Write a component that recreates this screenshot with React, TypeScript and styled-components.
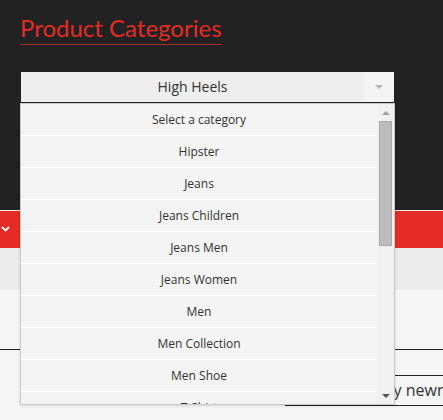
import React from "react";
import styled, { createGlobalStyle } from "styled-components";

const categories = [
  "Select a category",
  "Hipster",
  "Jeans",
  "Jeans Children",
  "Jeans Men",
  "Jeans Women",
  "Men",
  "Men Collection",
  "Men Shoe",
  "T-Shirt",
];

const GlobalStyle = createGlobalStyle`
  html, body {
    margin: 0;
    padding: 0;
    background: #f5f5f5;
    overflow: hidden;
  }
  * {
    box-sizing: border-box;
  }
`;

const App = () => {
  return (
    <>
      <GlobalStyle />
      <Page>
        <Header>
          <Title>Product Categories</Title>
          <SelectWrap>
            <SelectBox>
              <SelectValue>High Heels</SelectValue>
              <SelectArrow>
                <Triangle $dir="down" $color="#b5b5b5" />
              </SelectArrow>
            </SelectBox>
            <Dropdown>
              <OptionList>
                {categories.map((c) => (
                  <Option key={c}>{c}</Option>
                ))}
              </OptionList>
              <Scrollbar>
                <ScrollButton>
                  <Triangle $dir="up" $color="#a3a3a3" />
                </ScrollButton>
                <ScrollTrack>
                  <ScrollThumb />
                </ScrollTrack>
                <ScrollButton>
                  <Triangle $dir="down" $color="#555" />
                </ScrollButton>
              </Scrollbar>
            </Dropdown>
          </SelectWrap>
        </Header>
        <NavBar>
          <NavToggle>
            <svg width="9" height="6" viewBox="0 0 9 6">
              <polyline
                points="1,1 4.5,4.5 8,1"
                fill="none"
                stroke="#fff"
                strokeWidth="1.8"
              />
            </svg>
          </NavToggle>
        </NavBar>
        <SubBar />
        <Content>
          <Divider />
          <SortBox>Sort by newness</SortBox>
        </Content>
      </Page>
    </>
  );
};

/** page frame */
const Page = styled.div`
  position: relative;
  width: 443px;
  height: 420px;
  overflow: hidden;
  background: #f5f5f5;
  font-family: "Open Sans", "Liberation Sans", sans-serif;
`;

/** dark top area */
const Header = styled.div`
  height: 210px;
  background: #222222;
  padding: 13px 20px 0 20px;
`;

const Title = styled.h2`
  display: inline-block;
  margin: 0;
  font-family: Lato, "Open Sans", sans-serif;
  font-weight: 400;
  font-size: 24px;
  line-height: 29px;
  color: #e42b25;
  padding-bottom: 2px;
  border-bottom: 1px solid #a8302b;
`;

const SelectWrap = styled.div`
  position: relative;
  width: 375px;
  margin-top: 26px;
`;

const SelectBox = styled.div`
  display: flex;
  height: 32px;
  border: 1px solid #222;
  background: #eeeeee;
`;

const SelectValue = styled.div`
  flex: 1;
  text-align: center;
  font-size: 14px;
  line-height: 30px;
  color: #333;
`;

const SelectArrow = styled.div`
  width: 30px;
  display: flex;
  align-items: center;
  justify-content: center;
  background: #f4f4f4;
`;

const Triangle = styled.span<{ $dir: "up" | "down"; $color: string }>`
  width: 0;
  height: 0;
  border-left: 4px solid transparent;
  border-right: 4px solid transparent;
  ${({ $dir, $color }) =>
    $dir === "down"
      ? `border-top: 4px solid ${$color};`
      : `border-bottom: 4px solid ${$color};`}
`;

/** opened list of options */
const Dropdown = styled.div`
  position: absolute;
  top: 32px;
  left: 0;
  width: 375px;
  height: 302px;
  display: flex;
  background: #f4f4f4;
  border: 1px solid #c8c8c8;
  box-shadow: 0 1px 3px rgba(0, 0, 0, 0.12);
  z-index: 5;
`;

const OptionList = styled.div`
  flex: 1;
  overflow: hidden;
`;

const Option = styled.div`
  height: 32px;
  line-height: 31px;
  text-align: center;
  font-size: 12px;
  color: #333;
  border-bottom: 1px solid #ffffff;
`;

const Scrollbar = styled.div`
  width: 17px;
  display: flex;
  flex-direction: column;
  background: #f1f1f1;
`;

const ScrollButton = styled.div`
  height: 17px;
  display: flex;
  align-items: center;
  justify-content: center;
`;

const ScrollTrack = styled.div`
  flex: 1;
  padding: 0 2px;
`;

const ScrollThumb = styled.div`
  height: 125px;
  background: #bcbcbc;
  border: 1px solid #a9a9a9;
`;

/** red navigation band */
const NavBar = styled.div`
  height: 38px;
  background: #e42b25;
  border-top: 1px solid #e8e8e8;
  display: flex;
  align-items: center;
`;

const NavToggle = styled.div`
  width: 10px;
  display: flex;
  justify-content: center;
  margin-bottom: 2px;
`;

const SubBar = styled.div`
  height: 42px;
  background: #ececec;
`;

const Content = styled.div`
  padding-top: 59px;
`;

const Divider = styled.div`
  height: 1px;
  background: #222;
`;

const SortBox = styled.div`
  margin: 25px 0 0 285px;
  width: 220px;
  height: 31px;
  border-top: 1px solid #222;
  border-bottom: 1px solid #222;
  padding-left: 64px;
  font-size: 16px;
  line-height: 28px;
  color: #333;
  white-space: nowrap;
`;

export default App;
